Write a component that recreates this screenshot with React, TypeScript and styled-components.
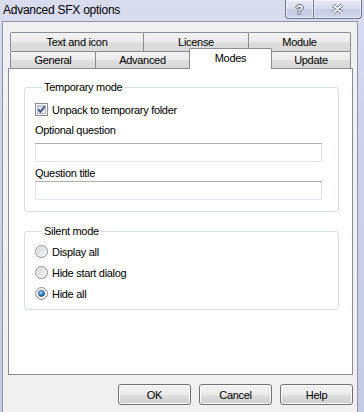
import React from "react";
import styled, { createGlobalStyle } from "styled-components";

const Global = createGlobalStyle`
  html, body { margin: 0; padding: 0; background: #c9cee4; }
  body { font-family: "Liberation Sans", Arial, sans-serif; }
  * { box-sizing: border-box; }
`;

const Window = styled.div`
  width: 364px;
  height: 412px;
  display: flex;
  flex-direction: column;
  overflow: hidden;
  background: linear-gradient(180deg, #d9dcef 0%, #cfd3ea 30%, #c5cbe3 100%);
`;

const TitleBar = styled.div`
  height: 21px;
  flex: none;
  display: flex;
  align-items: flex-start;
  justify-content: space-between;
  padding: 0 2px 0 3px;
`;

const Title = styled.div`
  font-size: 12px;
  letter-spacing: -0.25px;
  line-height: 20px;
  color: #000;
`;

const CaptionGroup = styled.div`
  display: flex;
`;

const CaptionButton = styled.div<{ $w: number; $first?: boolean }>`
  width: ${(p) => p.$w}px;
  height: 19px;
  margin-left: ${(p) => (p.$first ? 0 : -1)}px;
  border: 1px solid #6d7791;
  border-top: none;
  border-radius: ${(p) => (p.$first ? "0 0 0 4px" : "0 0 4px 0")};
  background: linear-gradient(180deg, #e6e8f4 0%, #d7dbee 50%, #c6cce4 51%, #cfd4ea 100%);
  box-shadow: inset 0 0 0 1px rgba(255, 255, 255, 0.55);
  display: flex;
  align-items: center;
  justify-content: center;
  font-size: 13px;
  font-weight: bold;
  color: #fff;
  text-shadow: -1px 0 #5d6680, 1px 0 #5d6680, 0 -1px #5d6680, 0 1px #5d6680;
`;

const Client = styled.div`
  flex: 1;
  margin: 0 6px 0 2px;
  border: 1px solid #8d95a8;
  border-bottom: none;
  background: #f0f0f0;
  padding: 10px 4px 7px 5px;
  display: flex;
  flex-direction: column;
  font-size: 11px;
  letter-spacing: -0.3px;
  color: #000;
`;

const TabStrip = styled.div`
  padding: 0 2px;
  display: flex;
  flex-direction: column;
`;

const TabRow = styled.div<{ $h: number }>`
  display: flex;
  align-items: flex-start;
  height: ${(p) => p.$h}px;
`;

const Tab = styled.div<{ $w: number; $first?: boolean; $active?: boolean }>`
  width: ${(p) => p.$w}px;
  flex: none;
  height: ${(p) => (p.$active ? 21 : 100)}${(p) => (p.$active ? "px" : "%")};
  margin-left: ${(p) => (p.$first ? 0 : -1)}px;
  margin-top: ${(p) => (p.$active ? -3 : 0)}px;
  border: 1px solid #898c95;
  border-bottom: none;
  border-radius: 2px 2px 0 0;
  background: ${(p) =>
    p.$active
      ? "#ffffff"
      : "linear-gradient(180deg, #f3f3f3 0%, #ebebeb 50%, #dedede 51%, #d9d9d9 100%)"};
  position: ${(p) => (p.$active ? "relative" : "static")};
  z-index: ${(p) => (p.$active ? 1 : "auto")};
  display: flex;
  align-items: center;
  justify-content: center;
  padding-bottom: ${(p) => (p.$active ? 2 : 0)}px;
  white-space: nowrap;
`;

const Panel = styled.div`
  flex: 1;
  background: #fff;
  border: 1px solid #898c95;
  padding: 11px 13px 0 15px;
  display: flex;
  flex-direction: column;
`;

const Group = styled.fieldset<{ $pad: string; $mt?: number }>`
  margin: ${(p) => p.$mt ?? 0}px 0 0 0;
  border: 1px solid #d5dfe5;
  border-radius: 3px;
  padding: ${(p) => p.$pad};
  min-width: 0;
  display: flex;
  flex-direction: column;
`;

const Legend = styled.legend`
  padding: 0 2px;
  margin-left: 7px;
  line-height: 14px;
  font-size: 11px;
`;

const OptionRow = styled.label<{ $h: number }>`
  display: flex;
  align-items: center;
  gap: 4px;
  height: ${(p) => p.$h}px;
  white-space: nowrap;
`;

const FieldLabel = styled.div<{ $mt: number }>`
  margin-top: ${(p) => p.$mt}px;
  line-height: 14px;
`;

const TextBox = styled.div<{ $mt: number }>`
  margin-top: ${(p) => p.$mt}px;
  height: 19px;
  background: #fff;
  border: 1px solid;
  border-color: #abadb3 #dbdfe6 #e3e9ef #e2e3ea;
`;

const ButtonRow = styled.div`
  margin-top: 9px;
  height: 21px;
  flex: none;
  display: flex;
  justify-content: flex-end;
  gap: 8px;
`;

const PushButton = styled.div`
  width: 73px;
  height: 21px;
  border: 1px solid #707070;
  border-radius: 3px;
  background: linear-gradient(180deg, #f2f2f2 0%, #ebebeb 50%, #dddddd 51%, #cfcfcf 100%);
  box-shadow: inset 0 0 0 1px #fcfcfc;
  display: flex;
  align-items: center;
  justify-content: center;
`;

const CheckBox = () => (
  <svg width="13" height="13" viewBox="0 0 13 13">
    <defs>
      <linearGradient id="cbFill" x1="0" y1="0" x2="1" y2="1">
        <stop offset="0" stopColor="#cbd1dd" />
        <stop offset="1" stopColor="#eef0f4" />
      </linearGradient>
    </defs>
    <rect x="0.5" y="0.5" width="12" height="12" fill="#fff" stroke="#8e8f8f" />
    <rect x="2.5" y="2.5" width="8" height="8" fill="url(#cbFill)" stroke="#b4bccb" />
    <path d="M3.2 6.4 L5.4 8.8 L9.9 3.4" fill="none" stroke="#3f5683" strokeWidth="1.8" />
  </svg>
);

const Radio = ({ checked }: { checked?: boolean }) => (
  <svg width="13" height="13" viewBox="0 0 13 13">
    <defs>
      <linearGradient id="rbFill" x1="0" y1="0" x2="1" y2="1">
        <stop offset="0" stopColor="#d2d4d6" />
        <stop offset="1" stopColor="#f7f7f7" />
      </linearGradient>
      <radialGradient id="rbDot" cx="0.4" cy="0.35" r="0.7">
        <stop offset="0" stopColor="#b9e2fb" />
        <stop offset="0.5" stopColor="#3f8bd2" />
        <stop offset="1" stopColor="#174a8a" />
      </radialGradient>
    </defs>
    <circle cx="6.5" cy="6.5" r="6" fill="#f4f4f4" stroke="#8e8f8f" />
    <circle cx="6.5" cy="6.5" r="4.5" fill="url(#rbFill)" />
    {checked && <circle cx="6.5" cy="6.5" r="3" fill="url(#rbDot)" stroke="#27466f" strokeWidth="0.6" />}
  </svg>
);

export default function App() {
  return (
    <>
      <Global />
      <Window>
        <TitleBar>
          <Title>Advanced SFX options</Title>
          <CaptionGroup>
            <CaptionButton $w={29} $first>?</CaptionButton>
            <CaptionButton $w={49}>
              <svg width="11" height="10" viewBox="0 0 11 10">
                <path
                  d="M1 1 L10 9 M10 1 L1 9"
                  stroke="#5d6680"
                  strokeWidth="3.4"
                  strokeLinecap="round"
                />
                <path d="M1 1 L10 9 M10 1 L1 9" stroke="#fff" strokeWidth="1.8" strokeLinecap="round" />
              </svg>
            </CaptionButton>
          </CaptionGroup>
        </TitleBar>
        <Client>
          <TabStrip>
            <TabRow $h={19}>
              <Tab $w={134} $first>Text and icon</Tab>
              <Tab $w={106}>License</Tab>
              <Tab $w={103}>Module</Tab>
            </TabRow>
            <TabRow $h={17}>
              <Tab $w={86} $first>General</Tab>
              <Tab $w={95}>Advanced</Tab>
              <Tab $w={83} $active>Modes</Tab>
              <Tab $w={80}>Update</Tab>
            </TabRow>
          </TabStrip>
          <Panel>
            <Group $pad="8px 16px 11px 10px">
              <Legend>Temporary mode</Legend>
              <OptionRow $h={15}>
                <CheckBox />
                Unpack to temporary folder
              </OptionRow>
              <FieldLabel $mt={6}>Optional question</FieldLabel>
              <TextBox $mt={6} />
              <FieldLabel $mt={4}>Question title</FieldLabel>
              <TextBox $mt={1} />
            </Group>
            <Group $pad="3px 10px 5px 10px" $mt={12}>
              <Legend>Silent mode</Legend>
              <OptionRow $h={21}>
                <Radio />
                Display all
              </OptionRow>
              <OptionRow $h={21}>
                <Radio />
                Hide start dialog
              </OptionRow>
              <OptionRow $h={21}>
                <Radio checked />
                Hide all
              </OptionRow>
            </Group>
          </Panel>
          <ButtonRow>
            <PushButton>OK</PushButton>
            <PushButton>Cancel</PushButton>
            <PushButton>Help</PushButton>
          </ButtonRow>
        </Client>
      </Window>
    </>
  );
}
